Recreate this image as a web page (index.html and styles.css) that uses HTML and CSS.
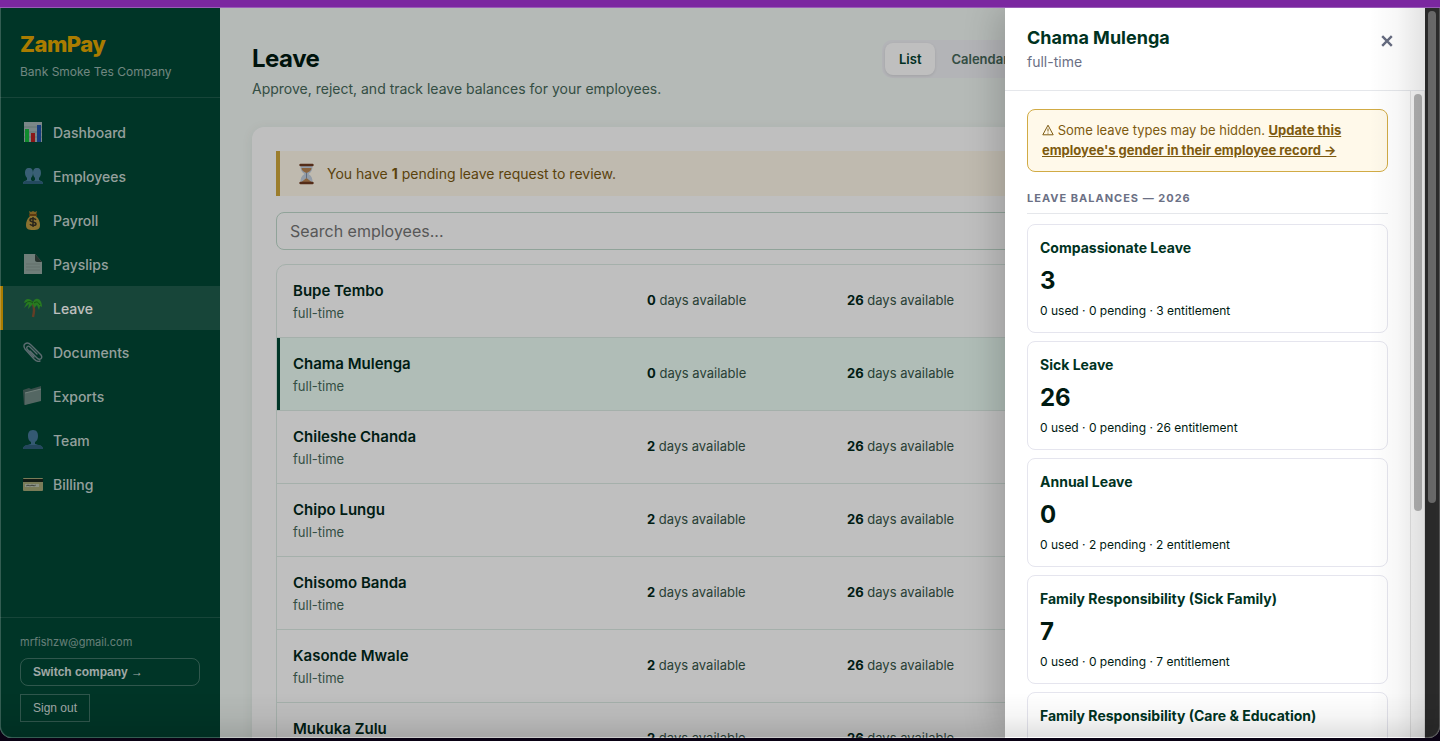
FILE: index.html
```html
<!doctype html>
<html lang="en">
  <head>
    <meta charset="UTF-8" />
    <meta name="viewport" content="width=device-width, initial-scale=1.0" />
    <title>Leave - ZamPay</title>
    <link rel="stylesheet" href="styles.css">
  </head>
  <body>
    <div class="strip"></div>

    <div class="window">
      <aside class="sidebar">
        <div class="brand">
          <div class="brand-name">ZamPay</div>
          <div class="brand-company">Bank Smoke Tes Company</div>
        </div>

        <nav class="nav">
          <a href="#">
            <svg viewBox="0 0 20 20"><path fill="#a3b5b6" d="M1 0h18v20H1z"/><path stroke="#869b9c" d="M1 5h18M1 10h18M1 15h18"/><path fill="#14b83c" d="M2 7h4v13H2z"/><path fill="#b81f1f" d="M8 11h4v9H8z"/><path fill="#1c50a8" d="M14 3h4v17h-4z"/></svg>
            Dashboard
          </a>
          <a href="#">
            <svg viewBox="0 0 20 20"><g fill="#4c7f9c"><path d="M6 2c3 0 4 2 4 5 0 2-1 4-2 5v2c1 1 3 1 3 4H0c0-3 2-3 4-4v-2C3 11 2 9 2 7c0-3 1-5 4-5z"/><path d="M14 2c3 0 4 2 4 5 0 2-1 4-2 5v2c2 1 4 1 4 4H9c0-3 2-3 3-4v-2c-1-1-2-3-2-5 0-3 1-5 4-5z"/></g><path fill="#31637f" d="M0 18c0-2 1-3 3-3h14c2 0 3 1 3 3z"/></svg>
            Employees
          </a>
          <a href="#">
            <svg viewBox="0 0 20 20"><path fill="#a98231" d="M6 1l2 1 2-1 2 1 2-1-1 4H7z"/><path fill="#b99840" d="M7 6h6c3 3 4 6 4 9 0 4-2 5-7 5s-7-1-7-5c0-3 1-6 4-9z"/><path stroke="#7a4e17" stroke-width="2" d="M6 5h8"/><path fill="none" stroke="#343126" stroke-width="1.5" d="M13 10c-1-2-6-2-6 0 0 3 6 1 6 4 0 2-5 2-6 0M10 7v10"/></svg>
            Payroll
          </a>
          <a href="#">
            <svg viewBox="0 0 20 20"><path fill="#95a8a2" d="M1 0h11l7 8v12H1z"/><path fill="#33443e" d="M12 0l7 8h-5c-1 0-2-1-2-2z"/><path stroke="#84968f" d="M3 10h14M3 13h14M3 16h14"/></svg>
            Payslips
          </a>
          <a href="#" class="active">
            <svg viewBox="0 0 20 20"><path fill="none" stroke="#875333" stroke-width="2.4" d="M10 6c2 5 1 9 0 13"/><path fill="#35a32c" d="M10 4C7 0 2 0 1 5l3-1-3 6 5-4-1 5 5-5 1 4 3-3 2 5 1-4 2 1c0-6-3-9-6-8-1 0-2 1-3 3z"/><path fill="none" stroke="#1c701c" d="M10 5C7 3 5 3 3 5M11 5c3-2 4-1 6 2"/></svg>
            Leave
          </a>
          <a href="#">
            <svg viewBox="0 0 20 20"><g fill="none" stroke="#7b9096" stroke-width="1.4" stroke-linecap="round"><path d="M7 9l7 7c3 3 6 0 4-3L8 3C4-1-1 2 2 7l9 10c2 2 4 3 6 2"/><path d="M14 12L7 5C5 3 3 5 4 7l7 8"/></g></svg>
            Documents
          </a>
          <a href="#">
            <svg viewBox="0 0 20 20"><path fill="#4d6a64" d="M0 4l6-2 2 1 10-3v14L1 19z"/><path fill="#718a84" d="M2 7l16-4v12L2 19z"/><path fill="none" stroke="#9aaea8" d="M2 7l16-4"/></svg>
            Exports
          </a>
          <a href="#">
            <svg viewBox="0 0 20 20"><path fill="#46779a" d="M10 0c4 0 5 3 5 6s-1 5-3 6v2c3 1 8 1 8 5H0c0-4 5-4 8-5v-2C6 11 5 9 5 6s1-6 5-6z"/><path fill="#315f7d" d="M0 19c0-2 2-4 4-4h12c2 0 4 2 4 4z"/></svg>
            Team
          </a>
          <a href="#">
            <svg viewBox="0 0 20 20"><rect y="4" width="20" height="13" rx="1" fill="#a3a676"/><path fill="#18251d" d="M0 5h20v3H0z"/><path fill="#b9c0b0" d="M2 10h14v3H2z"/><path stroke="#7d8779" d="M3 12l2-1 2 1 2-1 2 1 2-1"/></svg>
            Billing
          </a>
        </nav>

        <div class="account">
          <div class="email">mrfishzw@gmail.com</div>
          <button class="switch">Switch company →</button>
          <button class="signout">Sign out</button>
        </div>
      </aside>

      <main class="main">
        <header class="page-header">
          <div>
            <h1>Leave</h1>
            <p>Approve, reject, and track leave balances for your employees.</p>
          </div>
          <div class="tabs">
            <button class="active">List</button>
            <button>Calendar</button>
          </div>
        </header>

        <section class="card">
          <div class="pending">
            <svg viewBox="0 0 20 22"><path fill="#c4d0df" d="M4 3h12c0 4-1 6-4 8 3 2 4 4 4 8H4c0-4 1-6 4-8-3-2-4-4-4-8z"/><path fill="#b88452" d="M5 5h10c0 2-2 4-5 5-3-1-5-3-5-5zM10 15l5 4H5z"/><path stroke="#8092ab" d="M10 10v5"/><path stroke="#713b20" stroke-width="2.4" stroke-linecap="round" d="M4 2h12M4 20h12"/></svg>
            <span>You have <b>1</b> pending leave request to review.</span>
          </div>

          <input class="search" type="search" aria-label="Search employees" placeholder="Search employees..." />

          <div class="employees">
            <table>
              <tr>
                <td><div class="name">Bupe Tembo</div><div class="type">full-time</div></td>
                <td><b>0</b> days available</td>
                <td><b>26</b> days available</td>
              </tr>
              <tr class="selected">
                <td><div class="name">Chama Mulenga</div><div class="type">full-time</div></td>
                <td><b>0</b> days available</td>
                <td><b>26</b> days available</td>
              </tr>
              <tr>
                <td><div class="name">Chileshe Chanda</div><div class="type">full-time</div></td>
                <td><b>2</b> days available</td>
                <td><b>26</b> days available</td>
              </tr>
              <tr>
                <td><div class="name">Chipo Lungu</div><div class="type">full-time</div></td>
                <td><b>2</b> days available</td>
                <td><b>26</b> days available</td>
              </tr>
              <tr>
                <td><div class="name">Chisomo Banda</div><div class="type">full-time</div></td>
                <td><b>2</b> days available</td>
                <td><b>26</b> days available</td>
              </tr>
              <tr>
                <td><div class="name">Kasonde Mwale</div><div class="type">full-time</div></td>
                <td><b>2</b> days available</td>
                <td><b>26</b> days available</td>
              </tr>
              <tr>
                <td><div class="name">Mukuka Zulu</div><div class="type">full-time</div></td>
                <td><b>2</b> days available</td>
                <td><b>26</b> days available</td>
              </tr>
            </table>
          </div>
        </section>
      </main>

      <div class="page-scroll"><div class="thumb"></div></div>

      <div class="backdrop"></div>

      <div class="drawer" role="dialog" aria-labelledby="drawer-title">
        <header class="drawer-header">
          <div>
            <h2 id="drawer-title">Chama Mulenga</h2>
            <p>full-time</p>
          </div>
          <button class="close" aria-label="Close">
            <svg viewBox="0 0 10 10"><path d="M1 1l8 8M9 1L1 9"/></svg>
          </button>
        </header>

        <div class="drawer-body">
          <div class="drawer-content">
            <div class="notice">
              <svg viewBox="0 0 12 12"><path d="M6 1.2L11.2 10.800H.8zM6 4.500v3M6 8.600v1"/></svg>
              Some leave types may be hidden.
              <a href="#">Update this employee's gender in their employee record →</a>
            </div>

            <h3>Leave balances — 2026</h3>

            <div class="balances">
              <div class="balance">
                <h4>Compassionate Leave</h4>
                <strong>3</strong>
                <p>0 used · 0 pending · 3 entitlement</p>
              </div>
              <div class="balance">
                <h4>Sick Leave</h4>
                <strong>26</strong>
                <p>0 used · 0 pending · 26 entitlement</p>
              </div>
              <div class="balance">
                <h4>Annual Leave</h4>
                <strong>0</strong>
                <p>0 used · 2 pending · 2 entitlement</p>
              </div>
              <div class="balance">
                <h4>Family Responsibility (Sick Family)</h4>
                <strong>7</strong>
                <p>0 used · 0 pending · 7 entitlement</p>
              </div>
              <div class="balance">
                <h4>Family Responsibility (Care &amp; Education)</h4>
              </div>
            </div>
          </div>
          <div class="drawer-scroll"><div class="thumb"></div></div>
        </div>
      </div>
    </div>
  </body>
</html>
```

FILE: styles.css
```css
* {
  box-sizing: border-box;
}

body {
  margin: 0;
  height: 100vh;
  display: flex;
  flex-direction: column;
  overflow: hidden;
  background: #0a0214;
  font-family: Inter, "Liberation Sans", sans-serif;
  font-size: 14px;
  color: #00281a;
}

h1,
h2,
h3,
h4,
p {
  margin: 0;
}

button {
  font-family: inherit;
  border: 0;
  background: none;
  cursor: pointer;
}

.strip {
  flex: none;
  height: 8px;
  background: #7b27a0;
  border-bottom: 1px solid #9a5cb8;
}

.window {
  position: relative;
  flex: 1;
  min-height: 0;
  display: flex;
  margin-bottom: 3px;
  overflow: hidden;
  border-radius: 0 0 12px 12px;
  background: #f2f8f4;
}

/* edge line and soft shading along the bottom */
.window::after {
  content: "";
  position: absolute;
  inset: 0;
  z-index: 3;
  pointer-events: none;
  border: 1px solid rgba(255, 255, 255, 0.2);
  border-top: 0;
  border-radius: 0 0 12px 12px;
  background: linear-gradient(to top, rgba(0, 0, 0, 0.12), rgba(0, 0, 0, 0.04) 20px, transparent 44px);
}

/* Sidebar */

.sidebar {
  flex: none;
  width: 220px;
  display: flex;
  flex-direction: column;
  background: #004734;
}

.brand {
  padding: 22px 20px 17px;
  border-bottom: 1px solid rgba(255, 255, 255, 0.12);
}

.brand-name {
  font-size: 22px;
  line-height: 28px;
  font-weight: 800;
  letter-spacing: -0.5px;
  color: #e3a600;
}

.brand-company {
  margin-top: 5px;
  font-size: 12px;
  line-height: 17px;
  color: rgba(255, 255, 255, 0.6);
}

.nav {
  flex: 1;
  padding-top: 12px;
}

.nav a {
  display: flex;
  align-items: center;
  gap: 10px;
  height: 44px;
  padding: 0 20px;
  border-left: 3px solid transparent;
  font-weight: 500;
  text-decoration: none;
  color: rgba(255, 255, 255, 0.78);
}

.nav svg {
  width: 20px;
  height: 20px;
}

.nav a.active {
  border-color: #e3a600;
  background: rgba(255, 255, 255, 0.12);
  color: #fff;
}

.account {
  display: flex;
  flex-direction: column;
  align-items: flex-start;
  gap: 8px;
  padding: 16px 20px;
  border-top: 1px solid rgba(255, 255, 255, 0.12);
}

.email {
  font-size: 11px;
  line-height: 16px;
  color: rgba(255, 255, 255, 0.55);
}

.account button {
  height: 28px;
  padding: 0 12px;
  border: 1px solid rgba(255, 255, 255, 0.25);
  font-family: "Liberation Sans", sans-serif;
  font-size: 12px;
  text-align: left;
  color: rgba(255, 255, 255, 0.85);
}

.account .switch {
  width: 100%;
  border-radius: 8px;
  font-weight: 700;
}

/* Page */

.main {
  flex: 1;
  min-width: 0;
  padding: 32px;
}

.page-header {
  display: flex;
  justify-content: space-between;
  align-items: flex-start;
  height: 87px;
}

h1 {
  margin-top: 4px;
  font-size: 24px;
  line-height: 30px;
  letter-spacing: -0.5px;
  color: #001a11;
}

.page-header p {
  margin-top: 5px;
  line-height: 20px;
  color: #46695a;
}

.tabs {
  display: flex;
  gap: 2px;
  width: 511px;
  padding: 3px;
  border-radius: 10px;
  background: #eff0f4;
}

.tabs button {
  height: 32px;
  padding: 0 14px;
  border-radius: 8px;
  font-size: 13px;
  font-weight: 600;
  color: #46695a;
}

.tabs .active {
  background: #fff;
  box-shadow: 0 1px 3px rgba(0, 0, 0, 0.1);
  color: #00402d;
}

.card {
  padding: 24px;
  border-radius: 12px;
  background: #fff;
  box-shadow: 0 2px 12px rgba(0, 71, 52, 0.08);
}

.pending {
  display: flex;
  align-items: center;
  gap: 10px;
  height: 45px;
  padding: 0 16px;
  border-left: 4px solid #cfa73b;
  background: #fff9ea;
  color: #7a5810;
}

.pending svg {
  width: 21px;
  height: 22px;
}

.search {
  display: block;
  width: 100%;
  height: 38px;
  margin: 16px 0 14px;
  padding: 0 13px;
  border: 1px solid #c0dacd;
  border-radius: 8px;
  background: #fff;
  font-family: inherit;
  font-size: 16px;
}

.search::placeholder {
  color: #757575;
}

.employees {
  overflow: hidden;
  border: 1px solid #dcebe4;
  border-radius: 10px;
}

table {
  width: 100%;
  border-spacing: 0;
}

td {
  width: 200px;
  height: 73px;
  padding: 0 0 2px;
  border-bottom: 1px solid #dcebe4;
  font-size: 13px;
  color: #365548;
}

td:first-child {
  width: 370px;
  padding: 16px 0 0 16px;
  vertical-align: top;
}

td:last-child {
  width: auto;
}

td b {
  color: #00281a;
}

.name {
  font-size: 15px;
  line-height: 20px;
  font-weight: 600;
  color: #00281a;
}

.type {
  margin-top: 3px;
  line-height: 18px;
  color: #46695a;
}

.selected td {
  background: #ebfdf4;
}

.selected td:first-child {
  box-shadow: inset 3px 0 #004734;
}

/* Scrollbars */

.page-scroll {
  flex: none;
  width: 15px;
  padding: 3px;
  background: #2c2c2c;
}

.thumb {
  border-radius: 4px;
  background: #b5b5b5;
}

.page-scroll .thumb {
  width: 8px;
  height: 68%;
  background: #6b6b6b;
}

.drawer-scroll {
  flex: none;
  width: 15px;
  padding: 3px;
  border: solid #e4e4e4;
  border-width: 0 1px;
  background: #fafafa;
}

.drawer-scroll .thumb {
  width: 8px;
  height: 65%;
}

/* Drawer */

.backdrop {
  position: absolute;
  inset: 0 15px 0 0;
  background: rgba(0, 0, 0, 0.25);
}

.drawer {
  position: absolute;
  inset: 0 15px 0 auto;
  width: 420px;
  display: flex;
  flex-direction: column;
  background: #fff;
  box-shadow: -8px 0 32px rgba(0, 0, 0, 0.18);
}

.drawer::after {
  content: "";
  position: absolute;
  inset: 0 0 0 auto;
  width: 56px;
  pointer-events: none;
  background: linear-gradient(to left, rgba(0, 0, 0, 0.11), rgba(0, 0, 0, 0.03) 50%, transparent);
}

.drawer-header {
  flex: none;
  display: flex;
  justify-content: space-between;
  align-items: flex-start;
  height: 83px;
  padding: 17px 22px;
  border-bottom: 1px solid #e5e7eb;
}

h2 {
  margin-top: 1px;
  font-size: 18px;
  line-height: 24px;
  color: #00331f;
}

.drawer-header p {
  margin-top: 2px;
  line-height: 20px;
  color: #6b7085;
}

.close {
  width: 32px;
  height: 32px;
  padding: 10px;
}

.close svg {
  display: block;
  width: 12px;
  height: 12px;
  fill: none;
  stroke: #666c80;
  stroke-width: 2;
}

.drawer-body {
  flex: 1;
  min-height: 0;
  display: flex;
}

.drawer-content {
  flex: 1;
  overflow: hidden;
  padding: 18px 22px;
}

.notice {
  padding: 10px 14px 11px;
  border: 1px solid #d1ab45;
  border-radius: 8px;
  background: #fff9ea;
  font-size: 13px;
  line-height: 20px;
  color: #7d5a10;
}

.notice svg {
  width: 12px;
  height: 12px;
  vertical-align: -1px;
  fill: none;
  stroke: currentColor;
  stroke-linejoin: round;
}

.notice a {
  font-weight: 700;
  color: inherit;
}

h3 {
  margin: 18px 0 10px;
  padding-bottom: 7px;
  border-bottom: 1px solid #e5e7eb;
  font-size: 11px;
  line-height: 16px;
  font-weight: 700;
  letter-spacing: 1px;
  text-transform: uppercase;
  color: #6b7085;
}

.balances {
  display: flex;
  flex-direction: column;
  gap: 8px;
}

.balance {
  flex: none;
  min-height: 109px;
  padding: 13px 12px 12px;
  border: 1px solid #e5e5ee;
  border-radius: 8px;
}

h4 {
  font-size: 14px;
  line-height: 20px;
  color: #00331f;
}

.balance strong {
  display: block;
  margin: 9px 0 8px;
  font-size: 24px;
  line-height: 28px;
  color: #001a11;
}

.balance p {
  font-size: 12px;
  line-height: 16px;
  color: #001a11;
}
```
